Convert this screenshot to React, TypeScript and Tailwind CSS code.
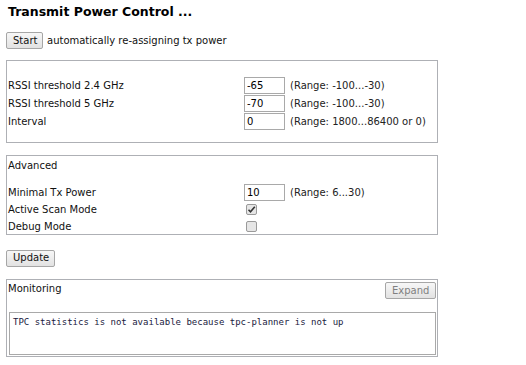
import React from 'react';

const font = { fontFamily: '"DejaVu Sans", Verdana, sans-serif' };

const Btn: React.FC<{ label: string; className?: string; disabled?: boolean }> = ({ label, className = '', disabled }) => (
  <button
    type="button"
    className={`h-[17px] px-[6px] border border-[#a6a6a6] rounded-[2px] bg-gradient-to-b from-[#f7f7f7] to-[#e2e2e2] text-[10px] leading-none ${
      disabled ? 'text-[#808080]' : 'text-[#111]'
    } ${className}`}
  >
    {label}
  </button>
);

const Row: React.FC<{ label: string; children: React.ReactNode; h?: string }> = ({ label, children, h = 'h-[18px]' }) => (
  <div className={`flex items-center ${h}`}>
    <div className="w-[236px] shrink-0">{label}</div>
    {children}
  </div>
);

const Field: React.FC<{ value: string; range: string }> = ({ value, range }) => (
  <>
    <input
      readOnly
      value={value}
      className="w-[41px] h-[17px] border border-[#a9a9a9] px-[2px] text-[10px] text-black outline-none"
    />
    <span className="ml-[5px] text-[#222]">{range}</span>
  </>
);

const Check: React.FC<{ checked?: boolean }> = ({ checked }) => (
  <span className="ml-[2px] w-[11px] h-[11px] rounded-[2px] border border-[#9a9a9a] bg-[#e6e6e6] flex items-center justify-center">
    {checked && (
      <svg width="9" height="9" viewBox="0 0 9 9">
        <path d="M1.5 4.8 L3.5 6.8 L7.8 1.8" fill="none" stroke="#333" strokeWidth="1.6" />
      </svg>
    )}
  </span>
);

export default function App() {
  return (
    <div className="w-[526px] h-[365px] bg-white text-[10px] text-[#111] pl-[6px]" style={font}>
      <h1 className="pt-[4px] pl-[2px] h-[31px] text-[12.5px] font-bold text-black leading-[16px]">
        Transmit Power Control ...
      </h1>
      <div className="flex items-center h-[17px] mt-[1px]">
        <Btn label="Start" className="w-[37px]" />
        <span className="ml-[4px]">automatically re-assigning tx power</span>
      </div>

      <div className="mt-[11px] w-[432px] h-[83px] border border-[#aeb0b5] pl-[1px] pt-[15px]">
        <Row label="RSSI threshold 2.4 GHz"><Field value="-65" range="(Range: -100...-30)" /></Row>
        <Row label="RSSI threshold 5 GHz"><Field value="-70" range="(Range: -100...-30)" /></Row>
        <Row label="Interval"><Field value="0" range="(Range: 1800...86400 or 0)" /></Row>
      </div>

      <div className="mt-[12px] w-[432px] h-[80px] border border-[#aeb0b5] pl-[1px]">
        <div className="h-[18px] flex items-center">Advanced</div>
        <div className="h-[9px]" />
        <Row label="Minimal Tx Power"><Field value="10" range="(Range: 6...30)" /></Row>
        <Row label="Active Scan Mode" h="h-[17px]"><Check checked /></Row>
        <Row label="Debug Mode" h="h-[16px]"><Check /></Row>
      </div>

      <div className="mt-[14px] h-[18px] flex items-center">
        <Btn label="Update" className="w-[49px]" />
      </div>

      <div className="mt-[12px] w-[432px] h-[78px] border border-[#aeb0b5] pl-[1px] pr-[1px]">
        <div className="flex items-start justify-between pt-[2px]">
          <span className="-mt-[1px]">Monitoring</span>
          <Btn label="Expand" className="w-[51px]" disabled />
        </div>
        <div className="mt-[13px] ml-[1px] h-[43px] border border-[#a9a9a9] px-[3px] pt-[3px] text-[9px] text-[#1a1a40]" style={{ fontFamily: '"DejaVu Sans Mono", "Liberation Mono", monospace' }}>
          TPC statistics is not available because tpc-planner is not up
        </div>
      </div>
    </div>
  );
}
